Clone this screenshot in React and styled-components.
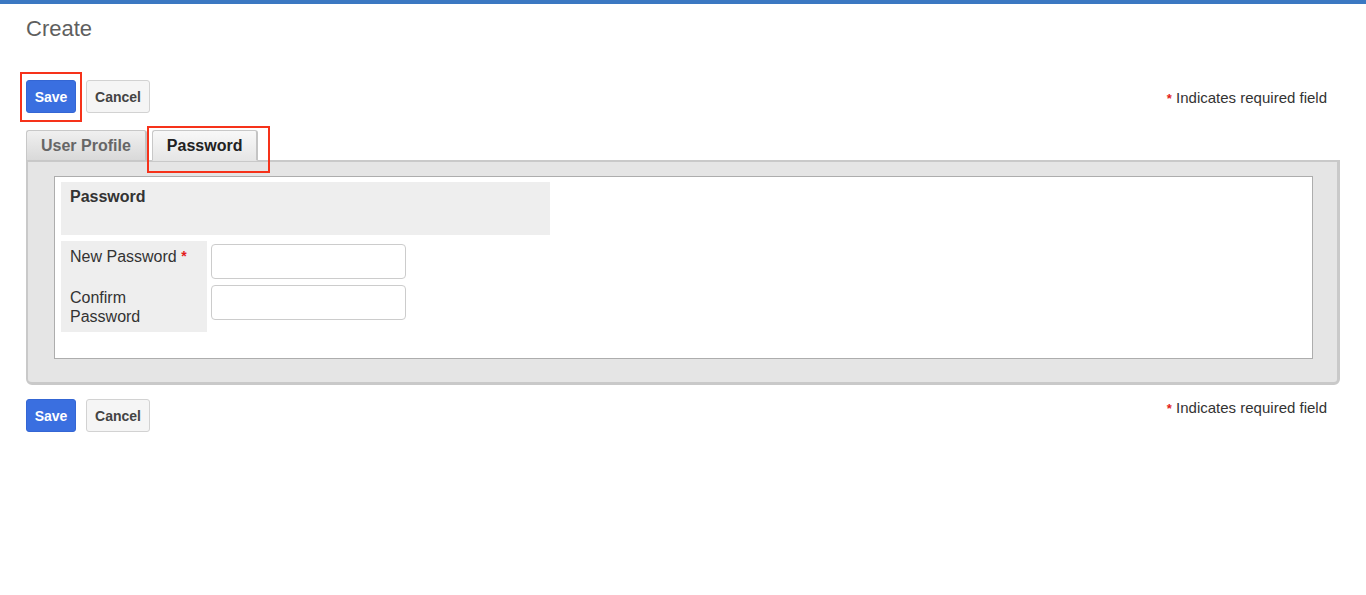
import React from "react";
import styled, { createGlobalStyle } from "styled-components";

const Global = createGlobalStyle`
  html, body { margin: 0; padding: 0; background: #fff; }
  body { font-family: "Liberation Sans", Arial, Helvetica, sans-serif; color: #333; }
  * { box-sizing: border-box; }
`;

const TopBar = styled.div`
  height: 4px;
  background: #3b78c2;
`;

const Page = styled.div`
  padding: 12px 26px 40px 26px;
`;

const Title = styled.h1`
  margin: 0;
  font-size: 22px;
  line-height: 26px;
  font-weight: normal;
  color: #5f5f5f;
`;

const ActionRow = styled.div`
  display: flex;
  align-items: flex-start;
  margin-top: ${(p) => p.$mt}px;
`;

const Buttons = styled.div`
  display: flex;
  gap: 10px;
`;

const Highlight = styled.span`
  position: relative;
  display: inline-flex;
  &::after {
    content: "";
    position: absolute;
    top: ${(p) => p.$t}px;
    right: ${(p) => p.$r}px;
    bottom: ${(p) => p.$b}px;
    left: ${(p) => p.$l}px;
    border: 2px solid #f6321a;
    pointer-events: none;
  }
`;

const Button = styled.button`
  width: ${(p) => p.$w}px;
  height: 33px;
  padding: 0;
  font-family: inherit;
  font-size: 14px;
  font-weight: bold;
  border-radius: 3px;
  cursor: pointer;
  color: ${(p) => (p.$primary ? "#fff" : "#444")};
  background: ${(p) => (p.$primary ? "#3a6fe0" : "#f5f5f5")};
  border: 1px solid ${(p) => (p.$primary ? "#3466d4" : "#d2d2d2")};
`;

const Required = styled.div`
  margin-left: auto;
  margin-right: 13px;
  margin-top: ${(p) => p.$mt}px;
  font-size: 15px;
  line-height: 18px;
  color: #333;
`;

const Star = styled.span`
  color: #e41c1c;
  font-weight: bold;
  font-size: ${(p) => p.$size || 13}px;
  vertical-align: ${(p) => p.$raise || 0}px;
`;

const Tabs = styled.div`
  display: flex;
  align-items: flex-end;
  gap: 5px;
  margin-top: 17px;
  position: relative;
  z-index: 1;
  margin-bottom: -1px;
`;

const Tab = styled.div`
  height: 31px;
  padding: 0 14px 0 14px;
  font-size: 16px;
  font-weight: bold;
  line-height: 29px;
  color: ${(p) => (p.$active ? "#222" : "#666")};
  background: ${(p) =>
    p.$active
      ? "linear-gradient(#f8f8f8, #e6e6e6)"
      : "linear-gradient(#f0f0f0, #d9d9d9)"};
  border: 1px solid #c8c8c8;
  border-right: 2px solid #c4c4c4;
  border-bottom: ${(p) => (p.$active ? "1px solid #e5e5e5" : "1px solid #c8c8c8")};
  border-radius: 3px 3px 0 0;
`;

const Panel = styled.div`
  background: #e5e5e5;
  border: 2px solid #c9c9c9;
  border-right-width: 3px;
  border-bottom-width: 3px;
  border-radius: 0 0 6px 6px;
  padding: 14px 24px 23px 26px;
`;

const Sheet = styled.div`
  background: #fff;
  border: 1px solid #adadad;
  padding: 5px 6px 26px 6px;
`;

const SectionHead = styled.div`
  width: 489px;
  height: 53px;
  background: #eee;
  padding: 6px 9px;
  font-size: 16px;
  line-height: 18px;
  font-weight: bold;
  color: #333;
`;

const FieldGrid = styled.div`
  display: grid;
  grid-template-columns: 146px auto;
  column-gap: 4px;
  margin-top: 6px;
  justify-content: start;
`;

const Label = styled.div`
  background: #eee;
  padding: 6px 9px 6px 9px;
  font-size: 16px;
  line-height: 19px;
  color: #333;
`;

const InputCell = styled.div`
  padding: 3px 0;
`;

const Input = styled.input`
  display: block;
  width: 195px;
  height: 35px;
  border: 1px solid #ccc;
  border-radius: 4px;
  background: #fff;
  font-family: inherit;
  font-size: 14px;
  padding: 0 8px;
  outline: none;
`;

function Actions({ mt, reqMt, highlight }) {
  const save = (
    <Button $primary $w={50}>
      Save
    </Button>
  );
  return (
    <ActionRow $mt={mt}>
      <Buttons>
        {highlight ? (
          <Highlight $t={-8} $r={-6} $b={-9} $l={-6}>
            {save}
          </Highlight>
        ) : (
          save
        )}
        <Button $w={64}>Cancel</Button>
      </Buttons>
      <Required $mt={reqMt}>
        <Star>*</Star> Indicates required field
      </Required>
    </ActionRow>
  );
}

export default function App() {
  return (
    <>
      <Global />
      <TopBar />
      <Page>
        <Title>Create</Title>
        <Actions mt={38} reqMt={9} highlight />
        <Tabs>
          <Tab>User Profile</Tab>
          <Highlight $t={-4} $r={-12} $b={-12} $l={-5}>
            <Tab $active>Password</Tab>
          </Highlight>
        </Tabs>
        <Panel>
          <Sheet>
            <SectionHead>Password</SectionHead>
            <FieldGrid>
              <Label>
                New Password <Star $size={14} $raise={1}>*</Star>
              </Label>
              <InputCell>
                <Input type="password" />
              </InputCell>
              <Label>
                Confirm
                <br />
                Password
              </Label>
              <InputCell>
                <Input type="password" />
              </InputCell>
            </FieldGrid>
          </Sheet>
        </Panel>
        <Actions mt={14} reqMt={0} />
      </Page>
    </>
  );
}
